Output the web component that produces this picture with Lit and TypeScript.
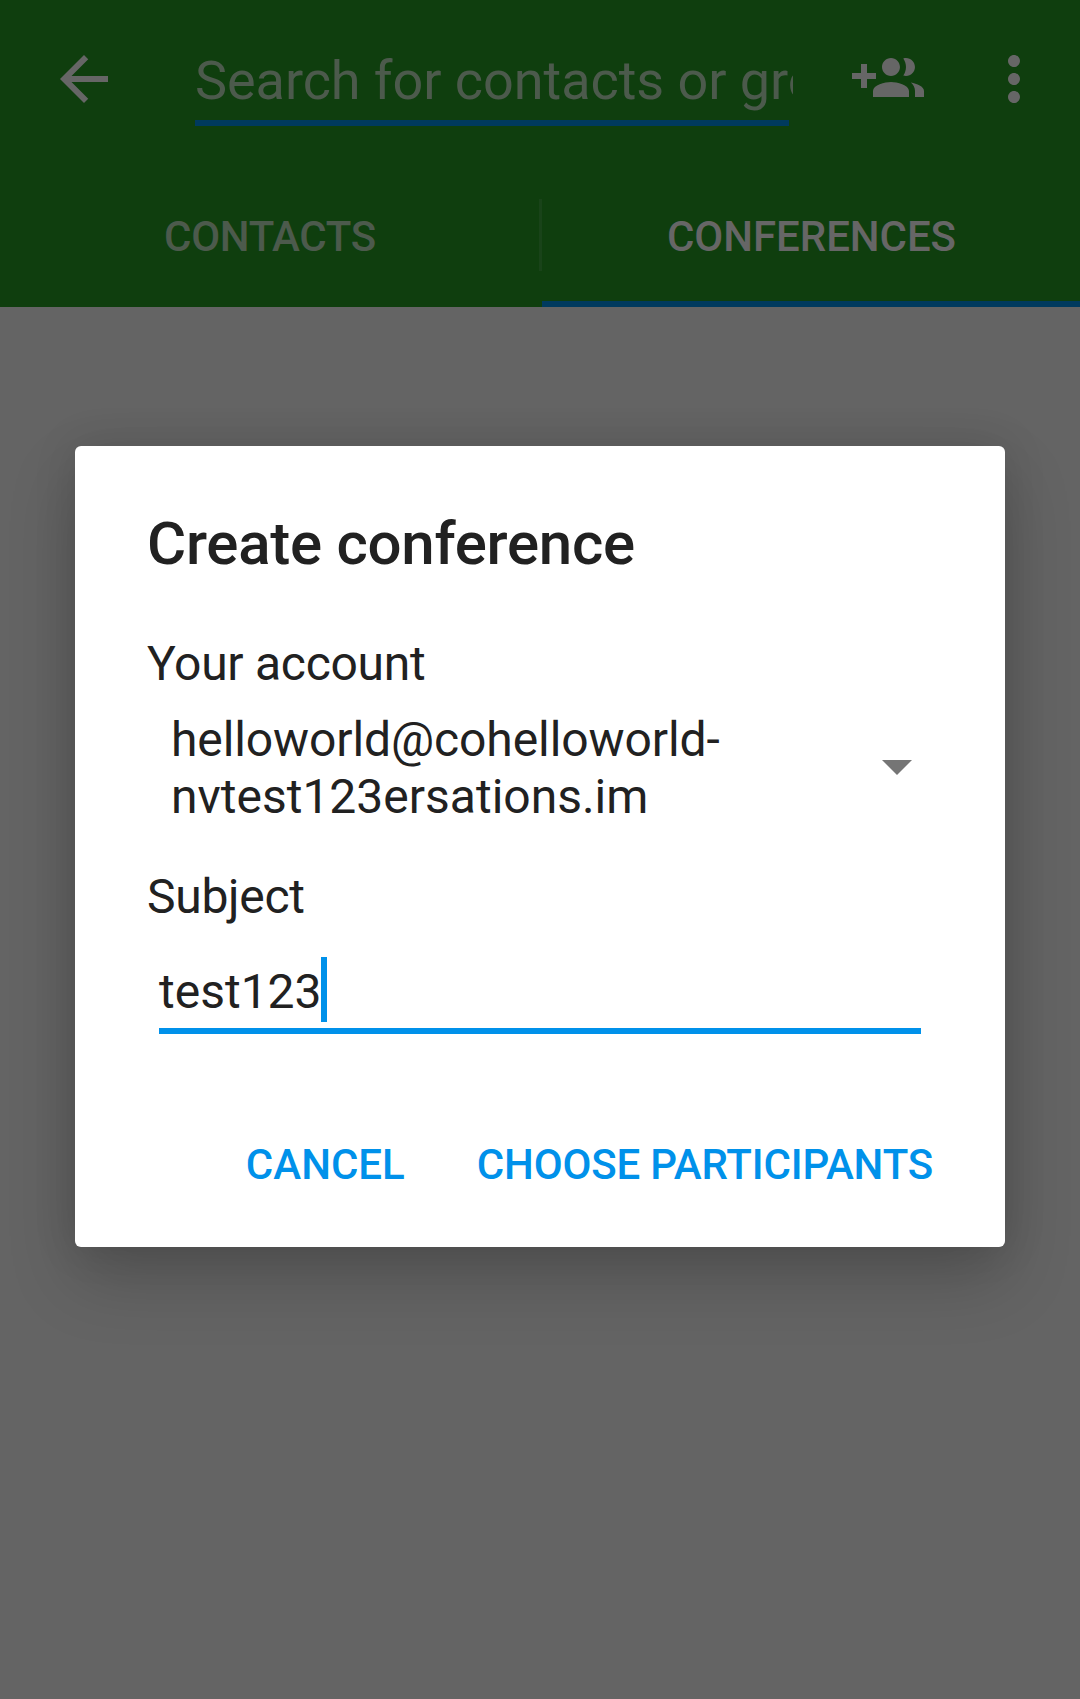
import { LitElement, html, css } from "lit";
import { customElement, property, state } from "lit/decorators.js";
import { classMap } from "lit/directives/class-map.js";

@customElement("app-toolbar")
class AppToolbar extends LitElement {
  static styles = css`
    :host {
      display: flex;
      align-items: flex-start;
      height: 168px;
      box-sizing: border-box;
      padding: 43px 30px 0 48px;
      color: #666666;
    }
    .icon {
      display: block;
      flex: none;
      width: 72px;
      height: 72px;
      fill: currentColor;
    }
    .search {
      flex: none;
      width: 598px;
      margin: 6px 59px 0 75px;
    }
    .hint {
      font-size: 54px;
      line-height: 64px;
      height: 71px;
      letter-spacing: -0.06px;
      color: #4c5a4c;
      white-space: nowrap;
      overflow: hidden;
    }
    .line {
      width: 594px;
      height: 6px;
      background: #003a5e;
    }
    .more {
      margin-left: 54px;
    }
  `;

  render() {
    return html`
      <svg class="icon" viewBox="0 0 24 24">
        <path d="M20 11H7.83l5.59-5.59L12 4l-8 8 8 8 1.41-1.41L7.83 13H20v-2z" />
      </svg>
      <div class="search">
        <div class="hint">Search for contacts or groups</div>
        <div class="line"></div>
      </div>
      <svg class="icon" viewBox="0 0 24 24">
        <path
          d="M8 10H5V7H3v3H0v2h3v3h2v-3h3v-2zm10 1c1.66 0 2.99-1.34 2.99-3S19.66 5 18 5c-.32 0-.63.05-.91.14.57.81.9 1.79.9 2.86s-.34 2.04-.9 2.86c.28.09.59.14.91.14zm-5 0c1.66 0 2.99-1.34 2.99-3S14.66 5 13 5c-1.66 0-3 1.34-3 3s1.34 3 3 3zm6.62 2.16c.83.73 1.38 1.66 1.38 2.84v2h3v-2c0-1.54-2.37-2.49-4.38-2.84zM13 13c-2 0-6 1-6 3v2h12v-2c0-2-4-3-6-3z"
        />
      </svg>
      <svg class="icon more" viewBox="0 0 24 24">
        <path
          d="M12 8c1.1 0 2-.9 2-2s-.9-2-2-2-2 .9-2 2 .9 2 2 2zm0 2c-1.1 0-2 .9-2 2s.9 2 2 2 2-.9 2-2-.9-2-2-2zm0 6c-1.1 0-2 .9-2 2s.9 2 2 2 2-.9 2-2-.9-2-2-2z"
        />
      </svg>
    `;
  }
}

@customElement("app-tabs")
class AppTabs extends LitElement {
  static styles = css`
    :host {
      display: grid;
      grid-template-columns: 539px 3px 538px;
      height: 139px;
    }
    .tab {
      display: flex;
      justify-content: center;
      box-sizing: border-box;
      padding: 44px 0 0 1px;
      font-size: 42px;
      line-height: 50px;
      font-weight: 500;
      letter-spacing: -0.3px;
      color: #4c5a4c;
      border-bottom: 6px solid transparent;
    }
    .tab.active {
      letter-spacing: -0.05px;
      color: #666666;
      border-bottom-color: #003a5e;
    }
    .divider {
      height: 72px;
      margin-top: 31px;
      background: #194319;
    }
  `;

  @state() private selected = "CONFERENCES";

  private tab(name: string) {
    return html`<div
      class=${classMap({ tab: true, active: this.selected === name })}
      @click=${() => (this.selected = name)}
    >
      ${name}
    </div>`;
  }

  render() {
    return html`${this.tab("CONTACTS")}
      <div class="divider"></div>
      ${this.tab("CONFERENCES")}`;
  }
}

@customElement("create-dialog")
class CreateDialog extends LitElement {
  static styles = css`
    :host {
      display: flex;
      flex-direction: column;
      box-sizing: border-box;
      width: 930px;
      height: 801px;
      padding: 63px 60px 0 72px;
      background: #ffffff;
      border-radius: 6px;
      box-shadow: 0 32px 68px rgba(0, 0, 0, 0.19), 0 0 44px rgba(0, 0, 0, 0.12);
      color: #212121;
      font-size: 48px;
      line-height: 57px;
    }
    .title {
      font-size: 60px;
      line-height: 70px;
      font-weight: 500;
      letter-spacing: -0.26px;
    }
    .label {
      margin-top: 56px;
      letter-spacing: -0.27px;
    }
    .spinner {
      display: flex;
      align-items: center;
      justify-content: space-between;
      margin-top: 19px;
      padding: 0 33px 0 24px;
    }
    .address {
      white-space: pre-line;
    }
    .address::first-line {
      letter-spacing: -0.1px;
    }
    .arrow {
      display: block;
      width: 30px;
      height: 15px;
      fill: #757575;
      margin-top: -1px;
    }
    .label.subject {
      margin-top: 43px;
    }
    .field {
      display: flex;
      align-items: flex-start;
      height: 71px;
      width: 762px;
      margin: 32px 0 0 12px;
      border-bottom: 6px solid #0091ea;
    }
    .value {
      padding-top: 6px;
    }
    .cursor {
      width: 6px;
      height: 65px;
      margin-left: -0.6px;
      background: #0091ea;
    }
    .actions {
      display: flex;
      justify-content: flex-end;
      gap: 72px;
      margin-top: 106px;
      padding-right: 12px;
      font-size: 42px;
      line-height: 50px;
      font-weight: 500;
      letter-spacing: -0.17px;
      color: #0091ea;
      white-space: nowrap;
    }
    .cancel {
      letter-spacing: 0;
    }
  `;

  @property() account = "";
  @property() subject = "";

  render() {
    return html`
      <div class="title">Create conference</div>
      <div class="label">Your account</div>
      <div class="spinner">
        <div class="address">${this.account}</div>
        <svg class="arrow" viewBox="0 0 30 15"><path d="M0 0h30L15 15z" /></svg>
      </div>
      <div class="label subject">Subject</div>
      <div class="field">
        <div class="value">${this.subject}</div>
        <div class="cursor"></div>
      </div>
      <div class="actions">
        <div class="cancel">CANCEL</div>
        <div>CHOOSE PARTICIPANTS</div>
      </div>
    `;
  }
}

@customElement("app-root")
class AppRoot extends LitElement {
  static styles = css`
    :host {
      display: block;
      position: relative;
      width: 1080px;
      height: 1699px;
      overflow: hidden;
      background: #646464;
      font-family: Roboto, "Liberation Sans", sans-serif;
    }
    .header {
      background: #0f3e0e;
    }
    .overlay {
      position: absolute;
      inset: 0;
      display: flex;
      justify-content: center;
      align-items: flex-start;
      padding-top: 446px;
    }
  `;

  render() {
    return html`
      <div class="header">
        <app-toolbar></app-toolbar>
        <app-tabs></app-tabs>
      </div>
      <div class="overlay">
        <create-dialog
          account=${"helloworld@cohelloworld-\nnvtest123ersations.im"}
          subject="test123"
        ></create-dialog>
      </div>
    `;
  }
}
